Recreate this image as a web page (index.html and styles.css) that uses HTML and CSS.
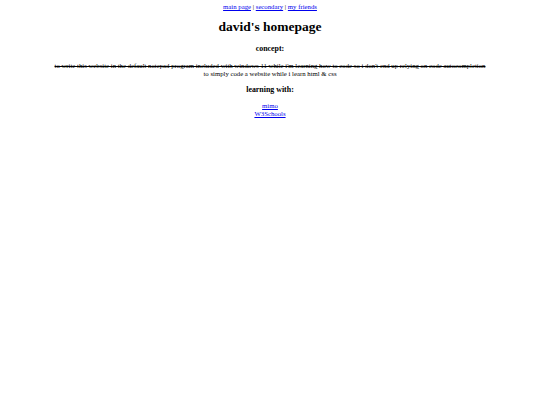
FILE: index.html
```html
<!DOCTYPE html>
<html>
<head>
<meta charset="utf-8">
<title>david's homepage</title>
<link rel="stylesheet" href="styles.css">
</head>
<body class="page">
<div class="nav"><a href="#">main page</a> | <a href="#">secondary</a> | <a href="#">my friends</a></div>
<h1 class="title">david's homepage</h1>
<h3 class="heading">concept:</h3>
<p class="text"><s>to write this website in the default notepad program included with windows 11 while i'm learning how to code so i don't end up relying on code autocompletion</s><br>to simply code a website while i learn html &amp; css</p>
<h3 class="heading heading-learn">learning with:</h3>
<div class="links"><a href="#">mimo</a><br><a href="#">W3Schools</a></div>
</body>
</html>
```
FILE: styles.css
```css
html {
  background: #fff;
}
.page {
  margin: 3px;
  font-family: "Liberation Serif", "Times New Roman", serif;
  font-size: 6.75px;
  line-height: 8px;
  text-align: center;
  color: #000;
}
.page a {
  color: #0000ee;
  text-decoration: underline;
}
.title {
  font-size: 13.5px;
  line-height: 16px;
  font-weight: bold;
  margin: 8px 0 9px;
}
.heading {
  font-size: 7.9px;
  line-height: 9px;
  font-weight: bold;
  margin: 8px 0;
}
.heading-learn {
  margin: 7px 0 8px;
}
.text {
  margin: 9px 0 6px;
}
```
